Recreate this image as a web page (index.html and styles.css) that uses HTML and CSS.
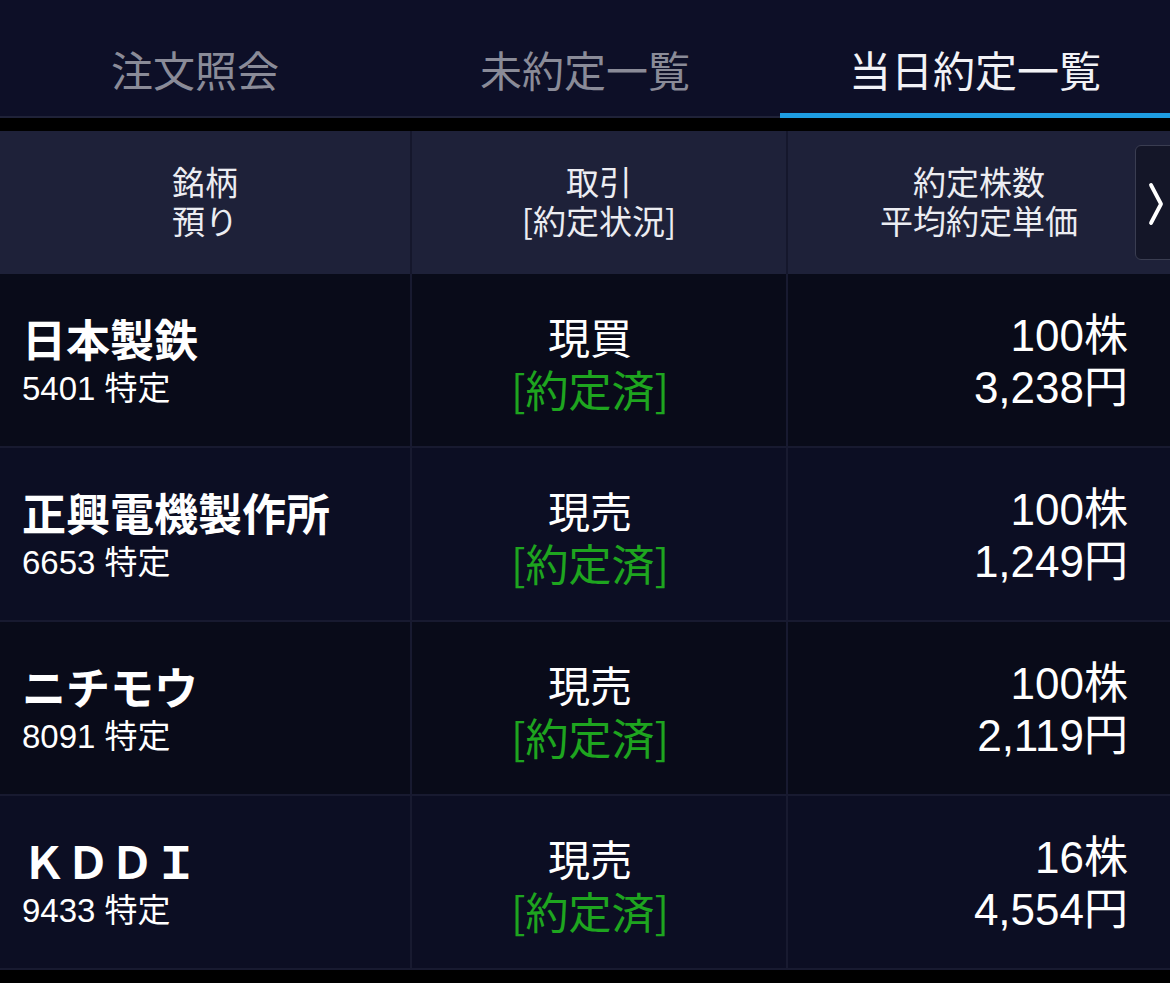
FILE: index.html
```html
<!DOCTYPE html>
<html lang="ja">
<head>
<meta charset="utf-8">
<title>当日約定一覧</title>
<link rel="stylesheet" href="styles.css">
</head>
<body>
<nav class="tabs">
  <div class="tab">注文照会</div>
  <div class="tab">未約定一覧</div>
  <div class="tab active">当日約定一覧</div>
</nav>
<div class="table">
  <div class="head-row">
    <div class="hcell">銘柄<br>預り</div>
    <div class="hcell">取引<br>[約定状況]</div>
    <div class="hcell">約定株数<br>平均約定単価</div>
    <div class="next-btn">
      <svg width="16" height="44" viewBox="0 0 16 44"><polyline points="3,3 13,22 3,41" fill="none" stroke="#ffffff" stroke-width="3.8" stroke-linecap="round" stroke-linejoin="round"/></svg>
    </div>
  </div>

  <div class="row odd">
    <div class="cell name-cell"><div class="name">日本製鉄</div><div class="code">5401 特定</div></div>
    <div class="cell trade-cell"><div class="trade">現買</div><div class="status">[約定済]</div></div>
    <div class="cell qty-cell"><div class="num">100株</div><div class="num">3,238円</div></div>
  </div>
  <div class="row even">
    <div class="cell name-cell"><div class="name">正興電機製作所</div><div class="code">6653 特定</div></div>
    <div class="cell trade-cell"><div class="trade">現売</div><div class="status">[約定済]</div></div>
    <div class="cell qty-cell"><div class="num">100株</div><div class="num">1,249円</div></div>
  </div>
  <div class="row odd">
    <div class="cell name-cell"><div class="name">ニチモウ</div><div class="code">8091 特定</div></div>
    <div class="cell trade-cell"><div class="trade">現売</div><div class="status">[約定済]</div></div>
    <div class="cell qty-cell"><div class="num">100株</div><div class="num">2,119円</div></div>
  </div>
  <div class="row even">
    <div class="cell name-cell"><div class="name">ＫＤＤＩ</div><div class="code">9433 特定</div></div>
    <div class="cell trade-cell"><div class="trade">現売</div><div class="status">[約定済]</div></div>
    <div class="cell qty-cell"><div class="num">16株</div><div class="num">4,554円</div></div>
  </div>
</div>
</body>
</html>
```

FILE: styles.css
```css
* { box-sizing: border-box; }
html, body { margin: 0; padding: 0; }
body {
  background: #000000;
  width: 1170px;
  height: 983px;
  overflow: hidden;
  font-family: "Noto Sans CJK JP", "Liberation Sans", sans-serif;
  color: #ffffff;
}

.tabs {
  display: grid;
  grid-template-columns: 390px 390px 390px;
  height: 118px;
  background: #0d0f27;
}
.tab {
  height: 118px;
  padding-top: 45px;
  line-height: 48px;
  text-align: center;
  font-size: 42px;
  color: #8a8b98;
  border-bottom: 2px solid #1f2238;
}
.tab.active {
  color: #f2f2f6;
  border-bottom: 5px solid #1e9de2;
}

.table {
  margin-top: 13px;
  background: #181a30;
  display: flex;
  flex-direction: column;
}

.head-row {
  position: relative;
  display: grid;
  grid-template-columns: 410px 374px 382px;
  column-gap: 2px;
  height: 143px;
  background: #15172c;
}
.hcell {
  background: #1e2139;
  display: flex;
  align-items: center;
  justify-content: center;
  text-align: center;
  font-size: 33px;
  line-height: 39px;
  color: #ecedf2;
  padding-bottom: 4px;
}
.next-btn {
  position: absolute;
  left: 1135px;
  top: 14px;
  width: 50px;
  height: 115px;
  border: 1px solid #3a3d51;
  border-radius: 6px;
  background: #141628;
  padding: 36px 0 0 12px;
}
.next-btn svg { display: block; }

.row {
  display: grid;
  grid-template-columns: 410px 374px 382px;
  column-gap: 2px;
  height: 174px;
  padding-bottom: 2px;
}
.row.odd .cell { background: #090b19; }
.row.even .cell { background: #0c0e23; }

.cell {
  display: flex;
  flex-direction: column;
  justify-content: center;
  padding-top: 4px;
}
.name-cell { padding-left: 22px; }
.name {
  font-size: 44px;
  line-height: 48px;
  font-weight: 700;
  margin-bottom: 6px;
}
.code {
  font-family: "Liberation Sans", "Noto Sans CJK JP", sans-serif;
  font-size: 33px;
  line-height: 42px;
}

.trade-cell {
  align-items: center;
  padding-right: 18px;
}
.trade {
  font-size: 42px;
  line-height: 52px;
}
.status {
  font-size: 43px;
  line-height: 52px;
  color: #1ea51f;
}

.qty-cell {
  align-items: flex-end;
  padding-right: 42px;
}
.num {
  font-family: "Liberation Sans", "Noto Sans CJK JP", sans-serif;
  font-size: 44px;
  line-height: 52px;
}
```
